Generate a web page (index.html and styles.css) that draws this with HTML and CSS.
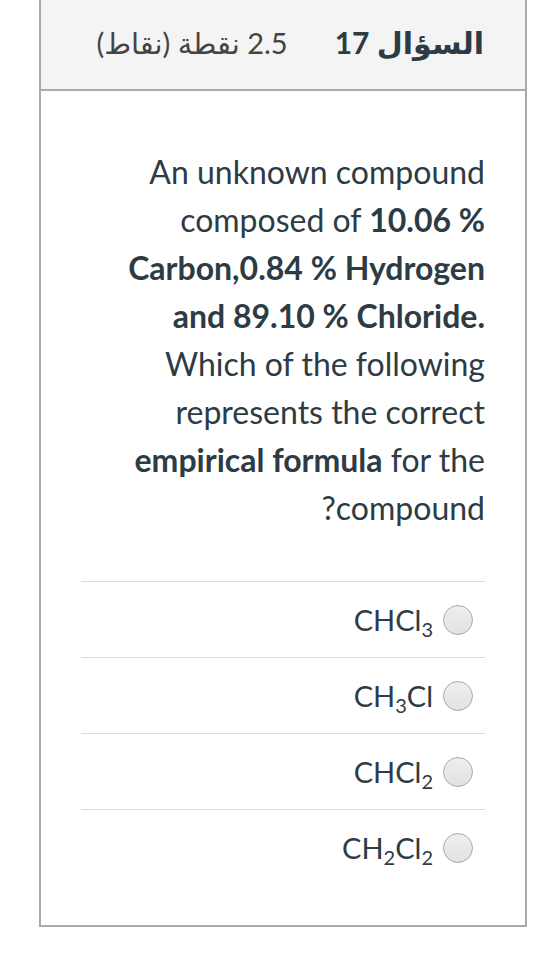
FILE: index.html
```html
<!DOCTYPE html>
<html lang="ar" dir="rtl">
<head>
<meta charset="utf-8">
<link rel="stylesheet" href="styles.css">
</head>
<body>
<div class="question">
  <div class="header">
    <span class="q-name">السؤال 17</span>
    <span class="q-points">2.5 نقطة (نقاط)</span>
  </div>
  <div class="content">
    <div class="text">
      <span class="line" dir="ltr">An unknown compound</span>
      <span class="line" dir="ltr">composed of <b>10.06 %</b></span>
      <span class="line" dir="ltr"><b>Carbon,0.84 % Hydrogen</b></span>
      <span class="line" dir="ltr"><b>and 89.10 % Chloride.</b></span>
      <span class="line" dir="ltr">Which of the following</span>
      <span class="line" dir="ltr">represents the correct</span>
      <span class="line" dir="ltr"><b>empirical formula</b> for the</span>
      <span class="line">compound?</span>
    </div>
    <div class="answers">
      <label class="answer"><span class="radio"></span><span class="label" dir="ltr">CHCl<sub>3</sub></span></label>
      <label class="answer"><span class="radio"></span><span class="label" dir="ltr">CH<sub>3</sub>Cl</span></label>
      <label class="answer"><span class="radio"></span><span class="label" dir="ltr">CHCl<sub>2</sub></span></label>
      <label class="answer"><span class="radio"></span><span class="label" dir="ltr">CH<sub>2</sub>Cl<sub>2</sub></span></label>
    </div>
  </div>
</div>
</body>
</html>
```
FILE: styles.css
```css
html, body {
  margin: 0;
  padding: 0;
  background: #ffffff;
}
body {
  font-family: Lato, "DejaVu Sans", sans-serif;
  color: #2d3b45;
}
.question {
  margin: -2px 21px 0 0;
  width: 488px;
  box-sizing: border-box;
  border: 2px solid #aaaaaa;
}
.header {
  background: #f4f4f4;
  border-bottom: 2px solid #aaaaaa;
  height: 91px;
  box-sizing: border-box;
  display: flex;
  align-items: center;
  gap: 47px;
  padding: 0 41px 4px 0;
}
.q-name {
  font-weight: 700;
  font-size: 30px;
  color: #2d3b45;
}
.q-points {
  font-size: 29px;
  color: #444444;
}
.content {
  padding: 57px 40px 40px 40px;
}
.text {
  margin: 0 0 49px 0;
  font-size: 32px;
  line-height: 48px;
}
.line {
  display: block;
  text-align: right;
}
.text b {
  font-weight: 700;
}
.answers {
  display: flex;
  flex-direction: column;
}
.answer {
  display: flex;
  align-items: center;
  gap: 10px;
  height: 76px;
  box-sizing: border-box;
  border-top: 1px solid #dcdcdc;
  padding: 0 12px 0 0;
  font-size: 29px;
}
.label sub {
  font-size: 20px;
  vertical-align: -6px;
  line-height: 0;
}
.radio {
  width: 28px;
  height: 28px;
  border-radius: 50%;
  border: 1px solid #a9a9a9;
  background: linear-gradient(#eeeeee, #e2e2e2);
  flex: none;
}
```
